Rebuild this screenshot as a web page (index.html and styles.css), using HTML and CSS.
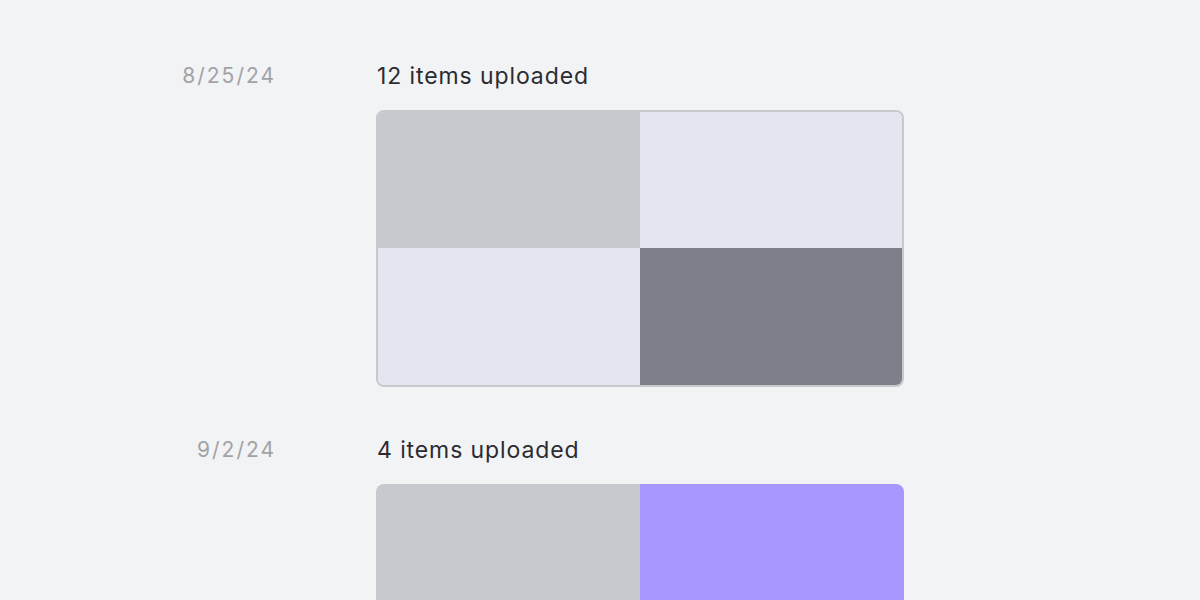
FILE: index.html
```html
<!DOCTYPE html>
<html>
<head>
<meta charset="utf-8">
<link rel="stylesheet" href="styles.css">
</head>
<body>
<main class="timeline">
  <section class="entry">
    <div class="date">8/25/24</div>
    <div class="content">
      <div class="title">12 items uploaded</div>
      <div class="card bordered">
        <div class="tile t-gray"></div>
        <div class="tile t-light"></div>
        <div class="tile t-light"></div>
        <div class="tile t-dark"></div>
      </div>
    </div>
  </section>
  <section class="entry">
    <div class="date">9/2/24</div>
    <div class="content">
      <div class="title">4 items uploaded</div>
      <div class="card">
        <div class="tile t-gray"></div>
        <div class="tile t-purple"></div>
        <div class="tile t-light"></div>
        <div class="tile t-gray"></div>
      </div>
    </div>
  </section>
</main>
</body>
</html>
```
FILE: styles.css
```css
html, body {
  margin: 0;
  padding: 0;
  background: #f2f3f5;
  height: 600px;
  overflow: hidden;
}
.timeline {
  display: flex;
  flex-direction: column;
  gap: 48px;
  padding-top: 61px;
}
.entry {
  display: grid;
  grid-template-columns: 274px 528px;
  column-gap: 102px;
}
.date {
  text-align: right;
  font-family: Inter, "Liberation Sans", sans-serif;
  font-size: 21px;
  line-height: 30px;
  color: #a2a2a7;
  letter-spacing: 2px;
  margin-right: -2px;
}
.content {
  display: flex;
  flex-direction: column;
  gap: 19px;
}
.title {
  font-family: Inter, "Liberation Sans", sans-serif;
  font-size: 23px;
  line-height: 30px;
  color: #2b2b31;
  letter-spacing: 0.9px;
  padding-left: 1px;
}
.card {
  display: grid;
  grid-template-columns: 1fr 1fr;
  grid-template-rows: 138px 138px;
  width: 528px;
  border-radius: 8px;
  overflow: hidden;
  box-sizing: border-box;
}
.card.bordered {
  border: 2px solid #c8c9ce;
  grid-template-rows: 136px 137px;
  height: 277px;
}
.t-gray { background: #c8c9ce; }
.t-light { background: #e3e6ee; }
.t-dark { background: #7f7f89; }
.t-purple { background: #a797ff; }
```
